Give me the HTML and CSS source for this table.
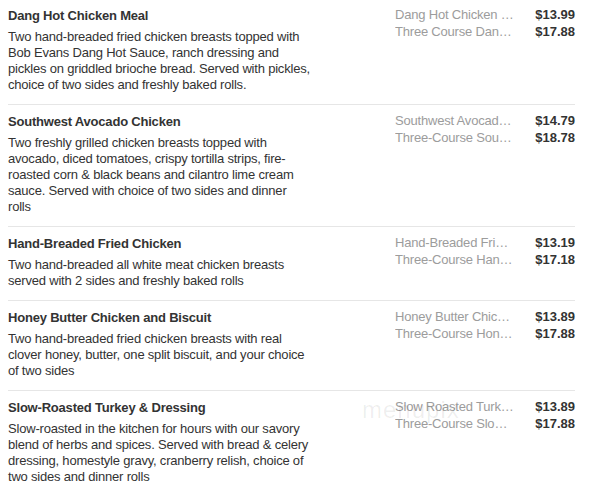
FILE: index.html
```html
<!DOCTYPE html>
<html lang="en">
<head>
  <meta charset="UTF-8">
  <meta name="viewport" content="width=device-width, initial-scale=1.0">
  <title>Menu</title>
  <link rel="stylesheet" href="styles.css">
</head>
<body>
<div class="menu">

  <div class="item">
    <div class="info">
      <h3>Dang Hot Chicken Meal</h3>
      <p>Two hand-breaded fried chicken breasts topped with Bob Evans Dang Hot Sauce, ranch dressing and pickles on griddled brioche bread. Served with pickles, choice of two sides and freshly baked rolls.</p>
    </div>
    <div class="options">
      <div class="option"><span class="opt-name">Dang Hot Chicken Meal</span><span class="price">$13.99</span></div>
      <div class="option"><span class="opt-name">Three Course Dang Hot Chicken</span><span class="price">$17.88</span></div>
    </div>
  </div>

  <div class="item">
    <div class="info">
      <h3>Southwest Avocado Chicken</h3>
      <p>Two freshly grilled chicken breasts topped with avocado, diced tomatoes, crispy tortilla strips, fire-roasted corn &amp; black beans and cilantro lime cream sauce. Served with choice of two sides and dinner rolls</p>
    </div>
    <div class="options">
      <div class="option"><span class="opt-name">Southwest Avocado Chicken</span><span class="price">$14.79</span></div>
      <div class="option"><span class="opt-name">Three-Course Southwest Avocado</span><span class="price">$18.78</span></div>
    </div>
  </div>

  <div class="item">
    <div class="info">
      <h3>Hand-Breaded Fried Chicken</h3>
      <p>Two hand-breaded all white meat chicken breasts served with 2 sides and freshly baked rolls</p>
    </div>
    <div class="options">
      <div class="option"><span class="opt-name">Hand-Breaded Fried Chicken</span><span class="price">$13.19</span></div>
      <div class="option"><span class="opt-name">Three-Course Hand-Breaded</span><span class="price">$17.18</span></div>
    </div>
  </div>

  <div class="item">
    <div class="info">
      <h3>Honey Butter Chicken and Biscuit</h3>
      <p>Two hand-breaded fried chicken breasts with real clover honey, butter, one split biscuit, and your choice of two sides</p>
    </div>
    <div class="options">
      <div class="option"><span class="opt-name">Honey Butter Chicken and Biscuit</span><span class="price">$13.89</span></div>
      <div class="option"><span class="opt-name">Three-Course Honey Butter</span><span class="price">$17.88</span></div>
    </div>
  </div>

  <div class="item">
    <div class="info">
      <h3>Slow-Roasted Turkey &amp; Dressing</h3>
      <p>Slow-roasted in the kitchen for hours with our savory blend of herbs and spices. Served with bread &amp; celery dressing, homestyle gravy, cranberry relish, choice of two sides and dinner rolls</p>
    </div>
    <div class="options">
      <span class="watermark">menupix</span>
      <div class="option"><span class="opt-name">Slow Roasted Turkey &amp; Dressing</span><span class="price">$13.89</span></div>
      <div class="option"><span class="opt-name">Three-Course Slow Roasted</span><span class="price">$17.88</span></div>
    </div>
  </div>

</div>
</body>
</html>
```

FILE: styles.css
```css
/* base */
body {
  margin: 0;
  background: #fff;
  font-family: "Liberation Sans", Arial, sans-serif;
  color: #333;
}
.menu {
  width: 567px;
  margin: -1px 0 0 8px;
}
/* menu items */
.item {
  display: flex;
  padding: 8px 0 11px;
  border-bottom: 1px solid #e6e6e6;
}
.info {
  width: 303px;
  letter-spacing: -0.2px;
}
.info h3 {
  margin: 0 0 5px;
  font-size: 13px;
  line-height: 17px;
  font-weight: bold;
  color: #333;
}
.info p {
  margin: 0;
  font-size: 13px;
  line-height: 16px;
  color: #333;
}
/* sizes and prices */
.options {
  position: relative;
  margin-left: auto;
  width: 180px;
}
.option {
  display: flex;
  justify-content: space-between;
  font-size: 13px;
  line-height: 16.7px;
}
.opt-name {
  flex-shrink: 0;
  width: 120px;
  white-space: nowrap;
  overflow: hidden;
  text-overflow: ellipsis;
  letter-spacing: -0.2px;
  color: #9c9c9c;
}
.price {
  font-weight: bold;
  color: #333;
}
.watermark {
  position: absolute;
  left: -33px;
  top: -3px;
  font-size: 24px;
  letter-spacing: 1px;
  color: rgba(0, 0, 0, 0.07);
}
```
